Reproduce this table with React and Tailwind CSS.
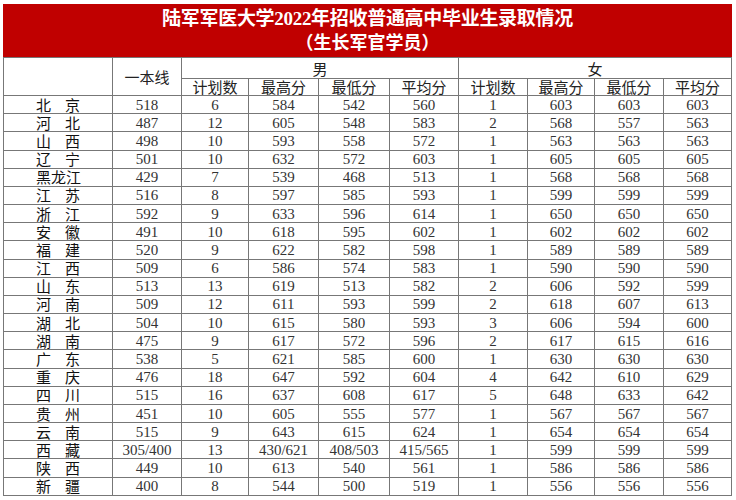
const rows = [
  ["北京", "518", "6", "584", "542", "560", "1", "603", "603", "603"],
  ["河北", "487", "12", "605", "548", "583", "2", "568", "557", "563"],
  ["山西", "498", "10", "593", "558", "572", "1", "563", "563", "563"],
  ["辽宁", "501", "10", "632", "572", "603", "1", "605", "605", "605"],
  ["黑龙江", "429", "7", "539", "468", "513", "1", "568", "568", "568"],
  ["江苏", "516", "8", "597", "585", "593", "1", "599", "599", "599"],
  ["浙江", "592", "9", "633", "596", "614", "1", "650", "650", "650"],
  ["安徽", "491", "10", "618", "595", "602", "1", "602", "602", "602"],
  ["福建", "520", "9", "622", "582", "598", "1", "589", "589", "589"],
  ["江西", "509", "6", "586", "574", "583", "1", "590", "590", "590"],
  ["山东", "513", "13", "619", "513", "582", "2", "606", "592", "599"],
  ["河南", "509", "12", "611", "593", "599", "2", "618", "607", "613"],
  ["湖北", "504", "10", "615", "580", "593", "3", "606", "594", "600"],
  ["湖南", "475", "9", "617", "572", "596", "2", "617", "615", "616"],
  ["广东", "538", "5", "621", "585", "600", "1", "630", "630", "630"],
  ["重庆", "476", "18", "647", "592", "604", "4", "642", "610", "629"],
  ["四川", "515", "16", "637", "608", "617", "5", "648", "633", "642"],
  ["贵州", "451", "10", "605", "555", "577", "1", "567", "567", "567"],
  ["云南", "515", "9", "643", "615", "624", "1", "654", "654", "654"],
  ["西藏", "305/400", "13", "430/621", "408/503", "415/565", "1", "599", "599", "599"],
  ["陕西", "449", "10", "613", "540", "561", "1", "586", "586", "586"],
  ["新疆", "400", "8", "544", "500", "519", "1", "556", "556", "556"],
];

const sub = ["计划数", "最高分", "最低分", "平均分"];

const cjk = "font-['Noto_Sans_CJK_SC','Noto_Sans',sans-serif]";
const serif = "font-['Liberation_Serif','Noto_Sans_CJK_SC',serif]";

export default function App() {
  return (
    <div className="w-[736px] h-[500px] bg-white pl-[3px] pt-[4px]">
      <div className="w-[729px]">
        <div
          className={`bg-[#c00000] h-[53px] w-[729px] flex flex-col items-center justify-center text-white font-bold leading-[24px] ${serif}`}
        >
          <div className="text-[19px] tracking-[-0.3px]">陆军军医大学2022年招收普通高中毕业生录取情况</div>
          <div className="text-[18px]">（生长军官学员）</div>
        </div>
        <table className="table-fixed border-collapse w-[729px] text-[#222]">
          <colgroup>
            <col className="w-[109px]" />
            <col className="w-[69px]" />
            <col className="w-[67px]" />
            <col className="w-[70px]" />
            <col className="w-[71px]" />
            <col className="w-[69px]" />
            <col className="w-[69px]" />
            <col className="w-[67px]" />
            <col className="w-[69px]" />
            <col className="w-[68px]" />
          </colgroup>
          <tbody>
            <tr className="h-[21px]">
              <td rowSpan={2} className="border border-[#777] p-0"></td>
              <td rowSpan={2} className={`border border-[#777] p-0 text-center text-[15px] leading-[17px] ${cjk}`}>
                一本线
              </td>
              <td colSpan={4} className={`border border-[#777] p-0 text-center text-[15px] leading-[17px] ${cjk}`}>
                男
              </td>
              <td colSpan={4} className={`border border-[#777] p-0 text-center text-[15px] leading-[17px] ${cjk}`}>
                女
              </td>
            </tr>
            <tr className="h-[17px]">
              {[...sub, ...sub].map((s, i) => (
                <td
                  key={i}
                  className={`border border-[#777] p-0 text-center text-[15px] leading-[16px] ${cjk}`}
                >
                  {s}
                </td>
              ))}
            </tr>
            {rows.map((r, i) => (
              <tr key={i} className="h-[18.18px]">
                <td className="border border-[#777] p-0">
                  <div className={`mx-auto w-[44px] flex justify-between text-[15px] leading-[16px] text-[#111] ${cjk}`}>
                    {r[0].split("").map((c, j) => (
                      <span key={j}>{c}</span>
                    ))}
                  </div>
                </td>
                {r.slice(1).map((v, j) => (
                  <td
                    key={j}
                    className={`border border-[#777] p-0 text-center text-[15px] leading-[16px] text-[#333] ${serif}`}
                  >
                    {v}
                  </td>
                ))}
              </tr>
            ))}
          </tbody>
        </table>
      </div>
    </div>
  );
}
